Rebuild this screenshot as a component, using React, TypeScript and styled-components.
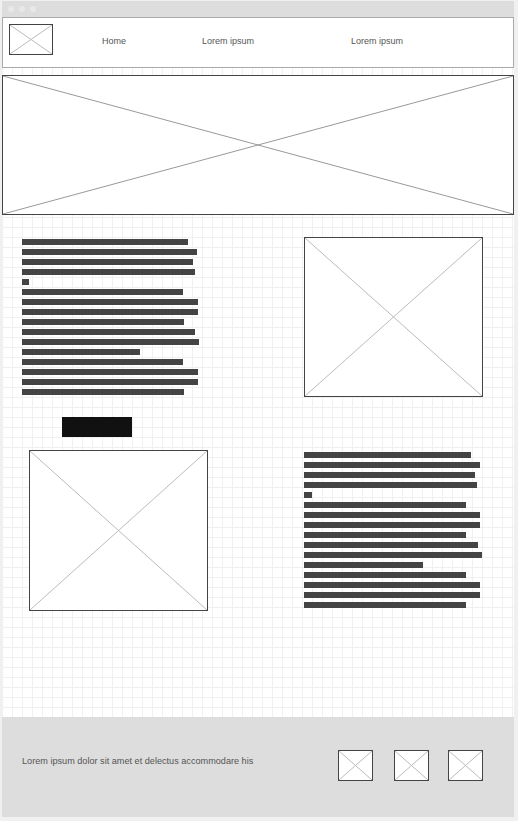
import React from 'react'
import styled, { createGlobalStyle } from 'styled-components'

const GlobalStyle = createGlobalStyle`
  html, body {
    margin: 0;
    padding: 0;
    background: #f0f0f0;
    font-family: "Liberation Sans", Arial, sans-serif;
  }
`

const Window = styled.div`
  background: #fff;
  display: flex;
  flex-direction: column;
  height: 816px;
  margin: 1px 0 0 2px;
  width: 512px;
`

const TitleBar = styled.div`
  align-items: center;
  background: #dddddd;
  display: flex;
  gap: 5px;
  height: 16px;
  padding-left: 6px;
`

const Dot = styled.span`
  background: #e8e8e8;
  border-radius: 50%;
  height: 6px;
  width: 6px;
`

const Header = styled.header`
  align-items: flex-start;
  background: #fff;
  border: 1px solid #aaaaaa;
  box-sizing: border-box;
  display: flex;
  height: 51px;
  padding: 6px 0 0 6px;
`

const NavLink = styled.a<{ $offset: number }>`
  color: #555;
  font-size: 9px;
  line-height: 12px;
  margin: 11px 0 0 ${(p) => p.$offset}px;
  text-decoration: none;
`

const Main = styled.main`
  background-color: #fff;
  background-image: linear-gradient(to right, #f0f0f0 1px, transparent 1px),
    linear-gradient(to bottom, #f0f0f0 1px, transparent 1px);
  background-position: 0 9px;
  background-size: 10px 10px;
  flex: 1;
  padding-top: 7px;
`

const Box = styled.div<{ $w: string; $h: number }>`
  background: #fff;
  border: 1px solid #444;
  box-sizing: border-box;
  flex-shrink: 0;
  height: ${(p) => p.$h}px;
  width: ${(p) => p.$w};

  svg {
    display: block;
    height: 100%;
    width: 100%;
  }
`

const Row = styled.section<{ $top: number; $left: number; $cols: string }>`
  align-items: start;
  display: grid;
  grid-template-columns: ${(p) => p.$cols};
  margin-top: ${(p) => p.$top}px;
  padding-left: ${(p) => p.$left}px;
`

const TextBlock = styled.div<{ $top: number }>`
  display: flex;
  flex-direction: column;
  gap: 4px;
  margin-top: ${(p) => p.$top}px;
`

const Bar = styled.div`
  background: #444;
  height: 6px;
`

const Button = styled.button`
  background: #111;
  border: none;
  display: block;
  height: 20px;
  margin: 20px 0 0 60px;
  padding: 0;
  width: 70px;
`

const Footer = styled.footer`
  background: #dddddd;
  box-sizing: border-box;
  display: flex;
  height: 100px;
  padding: 33px 31px 0 20px;
`

const FooterText = styled.p`
  color: #555;
  font-size: 9.15px;
  line-height: 11px;
  margin: 6px 0 0;
`

const Icons = styled.div`
  display: flex;
  margin-left: auto;
`

const IconSlot = styled.div<{ $gap: number }>`
  margin-left: ${(p) => p.$gap}px;
`

const Cross = ({ color = '#bbb' }: { color?: string }) => (
  <svg viewBox="0 0 100 100" preserveAspectRatio="none">
    <line x1="0" y1="0" x2="100" y2="100" stroke={color} strokeWidth="1" vectorEffect="non-scaling-stroke" />
    <line x1="100" y1="0" x2="0" y2="100" stroke={color} strokeWidth="1" vectorEffect="non-scaling-stroke" />
  </svg>
)

const Placeholder = ({ w, h, color }: { w: string; h: number; color?: string }) => (
  <Box $w={w} $h={h}>
    <Cross color={color} />
  </Box>
)

const leftBars = [166, 175, 171, 173, 7, 161, 176, 176, 162, 173, 177, 118, 161, 176, 176, 162]
const rightBars = [167, 176, 171, 173, 8, 162, 176, 176, 162, 174, 178, 119, 162, 176, 176, 162]

const Text = ({ bars, top }: { bars: number[]; top: number }) => (
  <TextBlock $top={top}>
    {bars.map((w, i) => (
      <Bar key={i} style={{ width: w }} />
    ))}
  </TextBlock>
)

const App = () => {
  return (
    <>
      <GlobalStyle />
      <Window>
        <TitleBar>
          <Dot />
          <Dot />
          <Dot />
        </TitleBar>
        <Header>
          <Placeholder w="44px" h={31} />
          <NavLink $offset={49}>Home</NavLink>
          <NavLink $offset={76}>Lorem ipsum</NavLink>
          <NavLink $offset={97}>Lorem ipsum</NavLink>
        </Header>
        <Main>
          <Placeholder w="100%" h={140} color="#999" />
          <Row $top={22} $left={20} $cols="282px 179px">
            <Text bars={leftBars} top={2} />
            <Placeholder w="179px" h={160} />
          </Row>
          <Button aria-label="button" />
          <Row $top={13} $left={27} $cols="275px 180px">
            <Placeholder w="179px" h={161} />
            <Text bars={rightBars} top={2} />
          </Row>
        </Main>
        <Footer>
          <FooterText>Lorem ipsum dolor sit amet et delectus accommodare his</FooterText>
          <Icons>
            <IconSlot $gap={0}>
              <Placeholder w="35px" h={31} />
            </IconSlot>
            <IconSlot $gap={21}>
              <Placeholder w="35px" h={31} />
            </IconSlot>
            <IconSlot $gap={19}>
              <Placeholder w="35px" h={31} />
            </IconSlot>
          </Icons>
        </Footer>
      </Window>
    </>
  )
}

export default App
